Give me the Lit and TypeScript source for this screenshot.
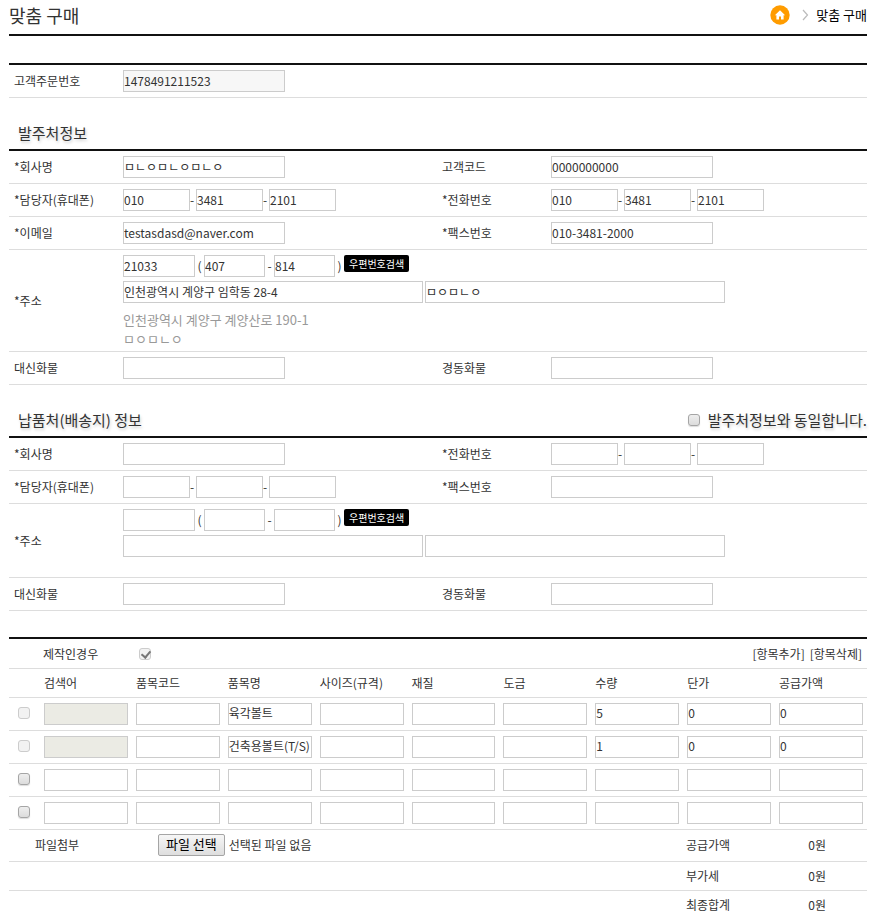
import { LitElement, html, css, nothing } from "lit";
import { customElement, state } from "lit/decorators.js";

interface Item {
  locked: boolean;
  values: string[];
}

const COLUMNS = ["검색어", "품목코드", "품목명", "사이즈(규격)", "재질", "도금", "수량", "단가", "공급가액"];

const emptyItem = (): Item => ({ locked: false, values: COLUMNS.map(() => "") });

@customElement("app-root")
export class AppRoot extends LitElement {
  @state() private items: Item[] = [
    { locked: true, values: ["", "", "육각볼트", "", "", "", "5", "0", "0"] },
    { locked: true, values: ["", "", "건축용볼트(T/S)", "", "", "", "1", "0", "0"] },
    emptyItem(),
    emptyItem(),
  ];

  @state() private fileName = "선택된 파일 없음";

  static styles = css`
    :host {
      display: block;
      padding: 0 6px 0 9px;
      background: #fff;
      color: #333;
      font-family: "Noto Sans CJK KR", sans-serif;
      font-size: 12px;
      line-height: 18px;
    }
    * {
      box-sizing: border-box;
    }
    h1,
    h2 {
      margin: 0;
      font-weight: 400;
    }
    a {
      color: inherit;
      text-decoration: none;
    }
    button {
      font-family: inherit;
      cursor: pointer;
    }

    .page-head {
      display: flex;
      justify-content: space-between;
      align-items: center;
      height: 34px;
      padding-bottom: 4px;
    }
    .page-head h1 {
      font-size: 18px;
    }
    .crumbs {
      display: flex;
      align-items: center;
      gap: 12px;
      color: #000;
      font-size: 13px;
    }
    .crumbs a,
    .crumbs svg {
      display: block;
    }
    .crumb-sep {
      margin-right: -5px;
    }
    .rule {
      margin-bottom: 27px;
      border-top: 2px solid #111;
    }

    .section {
      border-top: 2px solid #111;
    }
    .section-head {
      display: flex;
      justify-content: space-between;
      padding: 24px 0 5px 9px;
      font-size: 15px;
      line-height: 22px;
      text-shadow: 1px 2px 3px #ccc;
    }
    .section-head h2 {
      font-size: 15px;
    }
    .same {
      display: flex;
      align-items: center;
      gap: 8px;
    }

    .row {
      display: grid;
      grid-template-columns: 114px minmax(0, 1fr) 114px minmax(0, 1fr);
      align-items: center;
      min-height: 33px;
      padding: 5px 2px 5px 0;
      border-bottom: 1px solid #ddd;
    }
    .name {
      padding-left: 5px;
    }
    .wide {
      grid-column: 2 / -1;
    }
    .line {
      display: flex;
      align-items: center;
    }
    .dash {
      width: 6px;
    }
    .zip-mark {
      width: 9px;
      text-align: center;
    }
    .streets {
      display: flex;
      gap: 2px;
      margin-top: 4px;
    }
    .notes {
      min-height: 15px;
      color: #999;
      font-size: 13px;
      line-height: 19px;
    }
    .notes p {
      margin: 0;
    }
    .notes.filled {
      padding-top: 7px;
      margin-bottom: -2px;
    }

    .box {
      display: block;
      height: 22px;
      padding: 0 0 2px;
      border: 1px solid #ccc;
      border-radius: 0;
      background: #fff;
      color: #333;
      font-family: inherit;
      font-size: 12px;
      outline: 0;
    }
    .box:focus {
      border-color: #888;
    }
    .box:read-only {
      background: #f7f7f7;
    }
    .box:disabled {
      background: #ebebe4;
    }
    .single {
      width: 162px;
    }
    .phone {
      width: 67px;
    }
    .zip {
      width: 72px;
    }
    .zip-part {
      width: 61px;
    }
    .street {
      width: 300px;
    }
    .find {
      align-self: flex-start;
      height: 17px;
      padding: 0 5px;
      border: 0;
      border-radius: 2px;
      background: #000;
      color: #fff;
      font-size: 10px;
      line-height: 16px;
    }

    .check {
      appearance: none;
      display: block;
      flex: none;
      width: 12px;
      height: 12px;
      margin: 0;
      border: 1px solid #a5a5a5;
      border-radius: 3px;
      background: linear-gradient(#eee, #dcdcdc);
      box-shadow: 0 1px 1px #ddd;
    }
    .check:disabled {
      border-color: #ccc;
      background: #f2f2f2;
      box-shadow: none;
    }
    .check:checked::before {
      content: "";
      display: block;
      width: 4px;
      height: 7px;
      margin: 0 0 0 3px;
      border: solid #777;
      border-width: 0 2px 2px 0;
      transform: rotate(40deg);
    }

    .orders {
      margin-top: 26px;
    }
    .tools {
      display: flex;
      align-items: center;
      height: 30px;
      padding: 0 5px 0 34px;
      border-bottom: 1px solid #ddd;
    }
    .made {
      display: flex;
      align-items: center;
      gap: 41px;
    }
    .tool-links {
      display: flex;
      gap: 5px;
      margin-left: auto;
    }
    .text-button {
      padding: 0;
      border: 0;
      background: none;
      color: inherit;
      font-size: 12px;
      line-height: 18px;
    }

    .items {
      width: 100%;
      border-collapse: collapse;
      table-layout: fixed;
    }
    .items th,
    .items td {
      height: 33px;
      padding: 0 4px;
      border-bottom: 1px solid #ddd;
      font-weight: 400;
      text-align: left;
    }
    .items th {
      height: 28px;
    }
    .items .pick {
      width: 31px;
      padding: 0 0 2px 9px;
    }
    .items .box {
      width: 100%;
    }

    .totals {
      display: grid;
      grid-template-columns: 149px minmax(0, 1fr) 90px 91px;
      align-items: center;
      height: 29px;
      border-bottom: 1px solid #ddd;
    }
    .totals.with-file {
      height: 32px;
    }
    .totals:last-child {
      border-bottom: 0;
    }
    .file-name {
      padding-left: 26px;
    }
    .file {
      display: flex;
      align-items: center;
      gap: 4px;
    }
    .file-button {
      height: 22px;
      padding: 0 7px 2px;
      border: 1px solid #a5a5a5;
      border-radius: 2px;
      background: linear-gradient(#f6f6f6, #dedede);
      color: #000;
      font-size: 13px;
      line-height: 18px;
    }
    .sum {
      grid-column: 3;
    }
    .won {
      grid-column: 4;
      padding-right: 41px;
      text-align: right;
      white-space: nowrap;
    }
  `;

  private single(id: string, label: string, value = "", readonly = false) {
    return html`
      <label class="name" for=${id}>${label}</label>
      <div><input class="box single" id=${id} type="text" .value=${value} ?readonly=${readonly} /></div>
    `;
  }

  private phone(id: string, label: string, parts = ["", "", ""]) {
    return html`
      <label class="name" for="${id}-0">${label}</label>
      <div class="line" role="group" aria-label=${label}>
        ${parts.map(
          (part, i) => html`${i ? html`<span class="dash">-</span>` : nothing}<input
              class="box phone"
              id="${id}-${i}"
              type="text"
              aria-label="${label} ${i + 1}"
              .value=${part}
            />`
        )}
      </div>
    `;
  }

  private address(id: string, zip: string[], streets: string[], notes: string[]) {
    return html`
      <div class="row">
        <label class="name" for="${id}-zip">*주소</label>
        <div class="wide">
          <div class="line">
            <input class="box zip" id="${id}-zip" type="text" .value=${zip[0]} />
            <span class="zip-mark">(</span>
            <input class="box zip-part" type="text" aria-label="우편번호 앞자리" .value=${zip[1]} />
            <span class="zip-mark">-</span>
            <input class="box zip-part" type="text" aria-label="우편번호 뒷자리" .value=${zip[2]} />
            <span class="zip-mark">)</span>
            <button class="find" type="button">우편번호검색</button>
          </div>
          <div class="streets">
            <input class="box street" type="text" aria-label="기본주소" .value=${streets[0]} />
            <input class="box street" type="text" aria-label="상세주소" .value=${streets[1]} />
          </div>
          <div class="notes ${notes.length ? "filled" : ""}">${notes.map((note) => html`<p>${note}</p>`)}</div>
        </div>
      </div>
    `;
  }

  private addItem() {
    this.items = [...this.items, emptyItem()];
  }

  private removeItem() {
    this.items = this.items.slice(0, -1);
  }

  private openFile() {
    this.renderRoot.querySelector<HTMLInputElement>("#attachment")?.click();
  }

  private fileChosen(event: Event) {
    const file = (event.target as HTMLInputElement).files?.[0];
    this.fileName = file ? file.name : "선택된 파일 없음";
  }

  render() {
    return html`
      <header class="page-head">
        <h1>맞춤 구매</h1>
        <nav class="crumbs" aria-label="현재 위치">
          <a href="#" aria-label="홈">
            <svg width="20" height="20" viewBox="0 0 20 20">
              <circle cx="10" cy="10" r="9.7" fill="#ff9c00" />
              <path d="M10 5.2 4.9 10.2h1.5V14.6h2.6v-3.2h2v3.2h2.6v-4.4h1.5z" fill="#fff" />
            </svg>
          </a>
          <svg class="crumb-sep" width="7" height="12" viewBox="0 0 7 12">
            <path d="M1 1 5.5 6 1 11" fill="none" stroke="#bbb" stroke-width="1.2" />
          </svg>
          <a href="#">맞춤 구매</a>
        </nav>
      </header>
      <div class="rule"></div>

      <form @submit=${(e: Event) => e.preventDefault()}>
        <section class="section">
          <div class="row">${this.single("order-no", "고객주문번호", "1478491211523", true)}</div>
        </section>

        <div class="section-head"><h2>발주처정보</h2></div>
        <section class="section">
          <div class="row">
            ${this.single("buyer", "*회사명", "ㅁㄴㅇㅁㄴㅇㅁㄴㅇ")} ${this.single("buyer-code", "고객코드", "0000000000")}
          </div>
          <div class="row">
            ${this.phone("buyer-mobile", "*담당자(휴대폰)", ["010", "3481", "2101"])}
            ${this.phone("buyer-tel", "*전화번호", ["010", "3481", "2101"])}
          </div>
          <div class="row">
            ${this.single("buyer-mail", "*이메일", "testasdasd@naver.com")}
            ${this.single("buyer-fax", "*팩스번호", "010-3481-2000")}
          </div>
          ${this.address(
            "buyer-address",
            ["21033", "407", "814"],
            ["인천광역시 계양구 임학동 28-4", "ㅁㅇㅁㄴㅇ"],
            ["인천광역시 계양구 계양산로 190-1", "ㅁㅇㅁㄴㅇ"]
          )}
          <div class="row">
            ${this.single("buyer-daesin", "대신화물")} ${this.single("buyer-kyungdong", "경동화물")}
          </div>
        </section>

        <div class="section-head">
          <h2>납품처(배송지) 정보</h2>
          <label class="same"><input class="check" type="checkbox" />발주처정보와 동일합니다.</label>
        </div>
        <section class="section">
          <div class="row">${this.single("ship", "*회사명")} ${this.phone("ship-tel", "*전화번호")}</div>
          <div class="row">
            ${this.phone("ship-mobile", "*담당자(휴대폰)")} ${this.single("ship-fax", "*팩스번호")}
          </div>
          ${this.address("ship-address", ["", "", ""], ["", ""], [])}
          <div class="row">
            ${this.single("ship-daesin", "대신화물")} ${this.single("ship-kyungdong", "경동화물")}
          </div>
        </section>

        <section class="section orders">
          <div class="tools">
            <label class="made">제작인경우<input class="check" type="checkbox" checked disabled /></label>
            <div class="tool-links">
              <button class="text-button" type="button" @click=${this.addItem}>[항목추가]</button>
              <button class="text-button" type="button" @click=${this.removeItem}>[항목삭제]</button>
            </div>
          </div>
          <table class="items">
            <thead>
              <tr>
                <th class="pick"></th>
                ${COLUMNS.map((name) => html`<th scope="col">${name}</th>`)}
              </tr>
            </thead>
            <tbody>
              ${this.items.map(
                (item, r) => html`<tr>
                  <td class="pick">
                    <input class="check" type="checkbox" aria-label="${r + 1}번 항목 선택" ?disabled=${item.locked} />
                  </td>
                  ${item.values.map(
                    (value, c) => html`<td>
                      <input
                        class="box"
                        type="text"
                        aria-label="${COLUMNS[c]} ${r + 1}"
                        .value=${value}
                        ?disabled=${item.locked && c === 0}
                      />
                    </td>`
                  )}
                </tr>`
              )}
            </tbody>
          </table>
          <div class="totals with-file">
            <label class="file-name" for="attachment">파일첨부</label>
            <div class="file">
              <input id="attachment" type="file" hidden @change=${this.fileChosen} />
              <button class="file-button" type="button" @click=${this.openFile}>파일 선택</button>
              <span>${this.fileName}</span>
            </div>
            <span class="sum">공급가액</span><span class="won">0원</span>
          </div>
          <div class="totals"><span class="sum">부가세</span><span class="won">0원</span></div>
          <div class="totals"><span class="sum">최종합계</span><span class="won">0원</span></div>
        </section>
      </form>
    `;
  }
}
